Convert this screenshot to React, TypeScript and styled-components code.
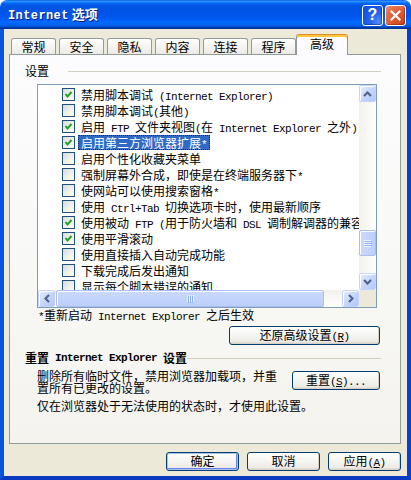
import React from "react"
import styled, { createGlobalStyle } from "styled-components"

const GlobalStyle = createGlobalStyle`
  *, *::before, *::after { box-sizing: border-box; }
  html, body { margin: 0; padding: 0; background: #fff; }
  body {
    font-family: "Noto Sans CJK SC", "Noto Sans", sans-serif;
    font-size: 12px;
    color: #000;
  }
`

const tabs = ["常规", "安全", "隐私", "内容", "连接", "程序", "高级"]

const rows = [
  { text: "禁用脚本调试 (Internet Explorer)", on: true },
  { text: "禁用脚本调试(其他)", on: false },
  { text: "启用 FTP 文件夹视图(在 Internet Explorer 之外)", on: true },
  { text: "启用第三方浏览器扩展*", on: true, selected: true },
  { text: "启用个性化收藏夹菜单", on: false },
  { text: "强制屏幕外合成，即使是在终端服务器下*", on: false },
  { text: "使网站可以使用搜索窗格*", on: false },
  { text: "使用 Ctrl+Tab 切换选项卡时，使用最新顺序", on: false },
  { text: "使用被动 FTP (用于防火墙和 DSL 调制解调器的兼容性)", on: true },
  { text: "使用平滑滚动", on: true },
  { text: "使用直接插入自动完成功能", on: false },
  { text: "下载完成后发出通知", on: false },
  { text: "显示每个脚本错误的通知", on: false },
]

// latin runs get the half-width mono face, like SimSun's ascii
const mix = (text: string) =>
  text
    .split(/([\x20-\x7e]+)/)
    .filter(Boolean)
    .map((part, i) =>
      /^[\x20-\x7e]+$/.test(part) ? (
        <Lat key={i}>{part}</Lat>
      ) : (
        <React.Fragment key={i}>{part}</React.Fragment>
      )
    )

const App = () => {
  return (
    <>
      <GlobalStyle />
      <Window>
        <TitleBar>
          <Title>
            <TitleLat>Internet</TitleLat> 选项
          </Title>
          <CaptionButtons>
            <HelpButton>?</HelpButton>
            <CloseButton>
              <svg width="11" height="11" viewBox="0 0 11 11">
                <path
                  d="M1.5 1.5 L9.5 9.5 M9.5 1.5 L1.5 9.5"
                  stroke="#fff"
                  strokeWidth="2.2"
                  strokeLinecap="square"
                />
              </svg>
            </CloseButton>
          </CaptionButtons>
        </TitleBar>

        <Body>
          <TabRow>
            {tabs.map((t, i) => (
              <Tab key={t} $active={i === tabs.length - 1}>
                {t}
              </Tab>
            ))}
          </TabRow>

          <Panel>
            <GroupHead $gap={19}>设置</GroupHead>

            <ListBox>
              <ListContent>
                {rows.map(r => (
                  <Row key={r.text}>
                    <Check>
                      {r.on && (
                        <svg width="9" height="9" viewBox="0 0 9 9">
                          <polyline
                            points="1.5,4 3.5,6.5 7.5,2"
                            fill="none"
                            stroke="#21A121"
                            strokeWidth="2"
                          />
                        </svg>
                      )}
                    </Check>
                    <Label $selected={!!r.selected}>{mix(r.text)}</Label>
                  </Row>
                ))}
              </ListContent>

              <VScroll>
                <ScrollBtn>
                  <svg width="9" height="6" viewBox="0 0 9 6">
                    <polyline points="1,5 4.5,1.5 8,5" fill="none" stroke="#4D6185" strokeWidth="2" />
                  </svg>
                </ScrollBtn>
                <VTrack>
                  <VThumb $offset={128}>
                    <svg width="8" height="7" viewBox="0 0 8 7">
                      <path d="M0 0.5H7M0 2.5H7M0 4.5H7M0 6.5H7" stroke="#EEF4FE" />
                      <path d="M1 1.5H8M1 3.5H8M1 5.5H8" stroke="#8CB0F8" />
                    </svg>
                  </VThumb>
                </VTrack>
                <ScrollBtn>
                  <svg width="9" height="6" viewBox="0 0 9 6">
                    <polyline points="1,1 4.5,4.5 8,1" fill="none" stroke="#4D6185" strokeWidth="2" />
                  </svg>
                </ScrollBtn>
              </VScroll>

              <HScroll>
                <ScrollBtn>
                  <svg width="6" height="9" viewBox="0 0 6 9">
                    <polyline points="5,1 1.5,4.5 5,8" fill="none" stroke="#4D6185" strokeWidth="2" />
                  </svg>
                </ScrollBtn>
                <HTrack>
                  <HThumb $width={268}>
                    <svg width="7" height="8" viewBox="0 0 7 8">
                      <path d="M0.5 0V7M2.5 0V7M4.5 0V7M6.5 0V7" stroke="#EEF4FE" />
                      <path d="M1.5 1V8M3.5 1V8M5.5 1V8" stroke="#8CB0F8" />
                    </svg>
                  </HThumb>
                </HTrack>
                <ScrollBtn>
                  <svg width="6" height="9" viewBox="0 0 6 9">
                    <polyline points="1,1 4.5,4.5 1,8" fill="none" stroke="#4D6185" strokeWidth="2" />
                  </svg>
                </ScrollBtn>
              </HScroll>

              <Corner />
            </ListBox>

            <Note>{mix("*重新启动 Internet Explorer 之后生效")}</Note>

            <PushButton $width={151} $align="flex-end" $mt={5} $mr={20}>
              还原高级设置<Lat>(</Lat>
              <Lat>
                <u>R</u>
              </Lat>
              <Lat>)</Lat>
            </PushButton>

            <GroupHead $gap={0} $bold>
              {mix("重置 Internet Explorer 设置")}
            </GroupHead>

            <ResetRow>
              <Para>删除所有临时文件，禁用浏览器加载项，并重置所有已更改的设置。</Para>
              <PushButton $width={88} $mt={1}>
                重置<Lat>(</Lat>
                <Lat>
                  <u>S</u>
                </Lat>
                <Lat>)...</Lat>
              </PushButton>
            </ResetRow>

            <Hint>仅在浏览器处于无法使用的状态时，才使用此设置。</Hint>
          </Panel>

          <Footer>
            <PushButton $width={73} $default>
              确定
            </PushButton>
            <PushButton $width={73}>取消</PushButton>
            <PushButton $width={73}>
              应用<Lat>(</Lat>
              <Lat>
                <u>A</u>
              </Lat>
              <Lat>)</Lat>
            </PushButton>
          </Footer>
        </Body>
      </Window>
    </>
  )
}

const Lat = styled.span`
  font-family: "Liberation Mono", monospace;
  font-size: 11px;
  letter-spacing: -0.6px;
  white-space: pre;
`

const Window = styled.div`
  width: 411px;
  height: 480px;
  display: flex;
  flex-direction: column;
`

const TitleBar = styled.div`
  height: 29px;
  flex: none;
  display: flex;
  align-items: center;
  justify-content: space-between;
  padding: 0 5px 0 8px;
  border-radius: 7px 7px 0 0;
  background: linear-gradient(
    to bottom,
    #0058ee 0%,
    #3593ff 4%,
    #288eff 6%,
    #127dff 8%,
    #036ffc 10%,
    #0262ee 14%,
    #0057e5 20%,
    #0054e3 24%,
    #0055eb 56%,
    #005bf5 66%,
    #026afe 76%,
    #0062ef 86%,
    #0052d6 92%,
    #0040ab 94%,
    #003092 100%
  );
`

const Title = styled.div`
  color: #fff;
  font-weight: bold;
  font-size: 13px;
  line-height: 13px;
  padding-top: 1px;
  text-shadow: 1px 1px #0a1883;
`

const TitleLat = styled.span`
  font-family: "Liberation Mono", monospace;
  font-size: 12px;
  letter-spacing: 0.4px;
`

const CaptionButtons = styled.div`
  display: flex;
  gap: 2px;
  padding-top: 1px;
`

const HelpButton = styled.div`
  width: 21px;
  height: 21px;
  border: 1px solid #fff;
  border-radius: 3px;
  display: flex;
  align-items: center;
  justify-content: center;
  color: #fff;
  font-family: "Liberation Sans", sans-serif;
  font-weight: bold;
  font-size: 16px;
  background: radial-gradient(circle at 90% 90%, #5a8ff8 0%, #2a66ee 40%, #1656e6 70%, #0e4ed8 100%);
  box-shadow: inset -1px -1px 1px rgba(0, 30, 140, 0.5);
`

const CloseButton = styled(HelpButton)`
  background: radial-gradient(circle at 90% 90%, #cc4623 0%, #e0582e 45%, #e57452 80%, #eea08a 100%);
  box-shadow: inset -1px -1px 1px rgba(120, 30, 0, 0.5);
`

const Body = styled.div`
  flex: 1;
  display: flex;
  flex-direction: column;
  background: #ece9d8;
  border-style: solid;
  border-width: 0 4px 4px 4px;
  border-color: #0855dd #0a3fc9 #0a3ac0 #0855dd;
  padding: 5px 6px 0 5px;
`

const TabRow = styled.div`
  height: 20px;
  display: flex;
  align-items: flex-end;
  gap: 3px;
  padding-left: 2px;
`

const Tab = styled.div<{ $active: boolean }>`
  width: ${p => (p.$active ? 52 : 45)}px;
  height: ${p => (p.$active ? 21 : 16)}px;
  margin-left: ${p => (p.$active ? -3 : 0)}px;
  margin-bottom: ${p => (p.$active ? -1 : 0)}px;
  position: relative;
  z-index: ${p => (p.$active ? 2 : 0)};
  display: flex;
  align-items: ${p => (p.$active ? "flex-start" : "center")};
  padding-top: ${p => (p.$active ? 3 : 0)}px;
  justify-content: center;
  font-size: 12px;
  line-height: 12px;
  border: 1px solid #919b9c;
  border-bottom: none;
  border-radius: 3px 3px 0 0;
  background: ${p =>
    p.$active ? "#fcfcfe" : "linear-gradient(to bottom, #ffffff 0%, #f3f2ee 60%, #ebeae4 100%)"};
  ${p =>
    p.$active &&
    `border-top: 1px solid #e68b2c;
     box-shadow: inset 0 2px 0 #ffc73c;`}
`

const Panel = styled.div`
  height: 390px;
  flex: none;
  display: flex;
  flex-direction: column;
  border: 1px solid #919b9c;
  background: linear-gradient(to bottom, #fcfcfe 0%, #f9f9f7 45%, #f4f3ee 100%);
  position: relative;
  z-index: 1;
`

const GroupHead = styled.div<{ $gap: number; $bold?: boolean }>`
  display: flex;
  align-items: center;
  height: 12px;
  line-height: 12px;
  margin: ${p => (p.$bold ? 7 : 10)}px 19px 0 15px;
  font-weight: ${p => (p.$bold ? "bold" : "normal")};
  white-space: nowrap;

  &::after {
    content: "";
    flex: 1;
    height: 1px;
    background: #d0d0bf;
    margin-left: ${p => p.$gap}px;
  }
`

const ListBox = styled.div`
  width: 340px;
  height: 224px;
  margin: 7px 0 0 27px;
  border: 1px solid #7f9db9;
  background: #fff;
  display: grid;
  grid-template-columns: 1fr 17px;
  grid-template-rows: 1fr 17px;
  overflow: hidden;
`

const ListContent = styled.div`
  overflow: hidden;
  padding-top: 1px;
`

const Row = styled.div`
  height: 16px;
  display: flex;
  align-items: center;
  padding-left: 24px;
  white-space: nowrap;
`

const Check = styled.div`
  width: 13px;
  height: 13px;
  flex: none;
  border: 1px solid #1c5180;
  background: linear-gradient(135deg, #dcdcd7 0%, #f0f0ec 55%, #ffffff 100%);
  display: flex;
  align-items: center;
  justify-content: center;
  margin-right: 4px;
`

const Label = styled.span<{ $selected: boolean }>`
  display: inline-block;
  line-height: 13px;
  height: 15px;
  padding: 0 2px;
  border: 1px dotted ${p => (p.$selected ? "#0c2a6e" : "transparent")};
  margin-left: -1px;
  background: ${p => (p.$selected ? "#316ac5" : "transparent")};
  color: ${p => (p.$selected ? "#fff" : "#000")};
`

const VScroll = styled.div`
  display: flex;
  flex-direction: column;
  background: #fbfbf8;
`

const HScroll = styled.div`
  display: flex;
  background: #fbfbf8;
`

const ScrollBtn = styled.div`
  width: 17px;
  height: 17px;
  flex: none;
  display: flex;
  align-items: center;
  justify-content: center;
  border: 1px solid #c3d3fd;
  border-radius: 2px;
  background: linear-gradient(135deg, #e6eeff 0%, #c6d6fc 50%, #b3c8f8 100%);
  box-shadow: inset 1px 1px 0 #fff;
`

const VTrack = styled.div`
  flex: 1;
  display: flex;
  flex-direction: column;
  background: linear-gradient(to right, #f3f1ec, #fefefb);
`

const HTrack = styled.div`
  flex: 1;
  display: flex;
  padding-left: 1px;
  background: linear-gradient(to bottom, #f3f1ec, #fefefb);
`

const thumbLook = `
  display: flex;
  align-items: center;
  justify-content: center;
  border: 1px solid #a9bef4;
  border-radius: 2px;
  box-shadow: inset 1px 1px 0 #fff;
`

const VThumb = styled.div<{ $offset: number }>`
  ${thumbLook}
  margin-top: ${p => p.$offset}px;
  height: 26px;
  background: linear-gradient(to right, #cad9fd, #bccffb);
`

const HThumb = styled.div<{ $width: number }>`
  ${thumbLook}
  width: ${p => p.$width}px;
  height: 17px;
  background: linear-gradient(to bottom, #cad9fd, #bccffb);
`

const Corner = styled.div`
  background: #ece9d8;
`

const Note = styled.div`
  height: 12px;
  line-height: 12px;
  margin: 1px 0 0 28px;
  white-space: nowrap;
`

const PushButton = styled.div<{
  $width: number
  $align?: string
  $mt?: number
  $mr?: number
  $default?: boolean
}>`
  width: ${p => p.$width}px;
  height: 19px;
  flex: none;
  align-self: ${p => p.$align || "auto"};
  margin-top: ${p => p.$mt || 0}px;
  margin-right: ${p => p.$mr || 0}px;
  text-align: center;
  line-height: 16px;
  white-space: nowrap;
  border: 1px solid #003c74;
  border-radius: 3px;
  background: linear-gradient(to bottom, #ffffff 0%, #f4f4f0 50%, #ecebe6 85%, #d6d0c5 100%);
  box-shadow: ${p =>
    p.$default ? "inset 0 0 0 1px #a8c3ee, inset -1px -1px 0 1px #6982ee" : "inset -1px -1px 0 #d6d0c5"};

  u {
    text-decoration: underline;
  }
`

const ResetRow = styled.div`
  display: flex;
  align-items: flex-start;
  justify-content: space-between;
  margin: 6px 20px 0 27px;
`

const Para = styled.div`
  width: 246px;
  line-height: 12px;
`

const Hint = styled.div`
  line-height: 12px;
  margin: 6px 0 0 27px;
  white-space: nowrap;
`

const Footer = styled.div`
  display: flex;
  justify-content: flex-end;
  gap: 8px;
  padding-top: 8px;
`

export default App
